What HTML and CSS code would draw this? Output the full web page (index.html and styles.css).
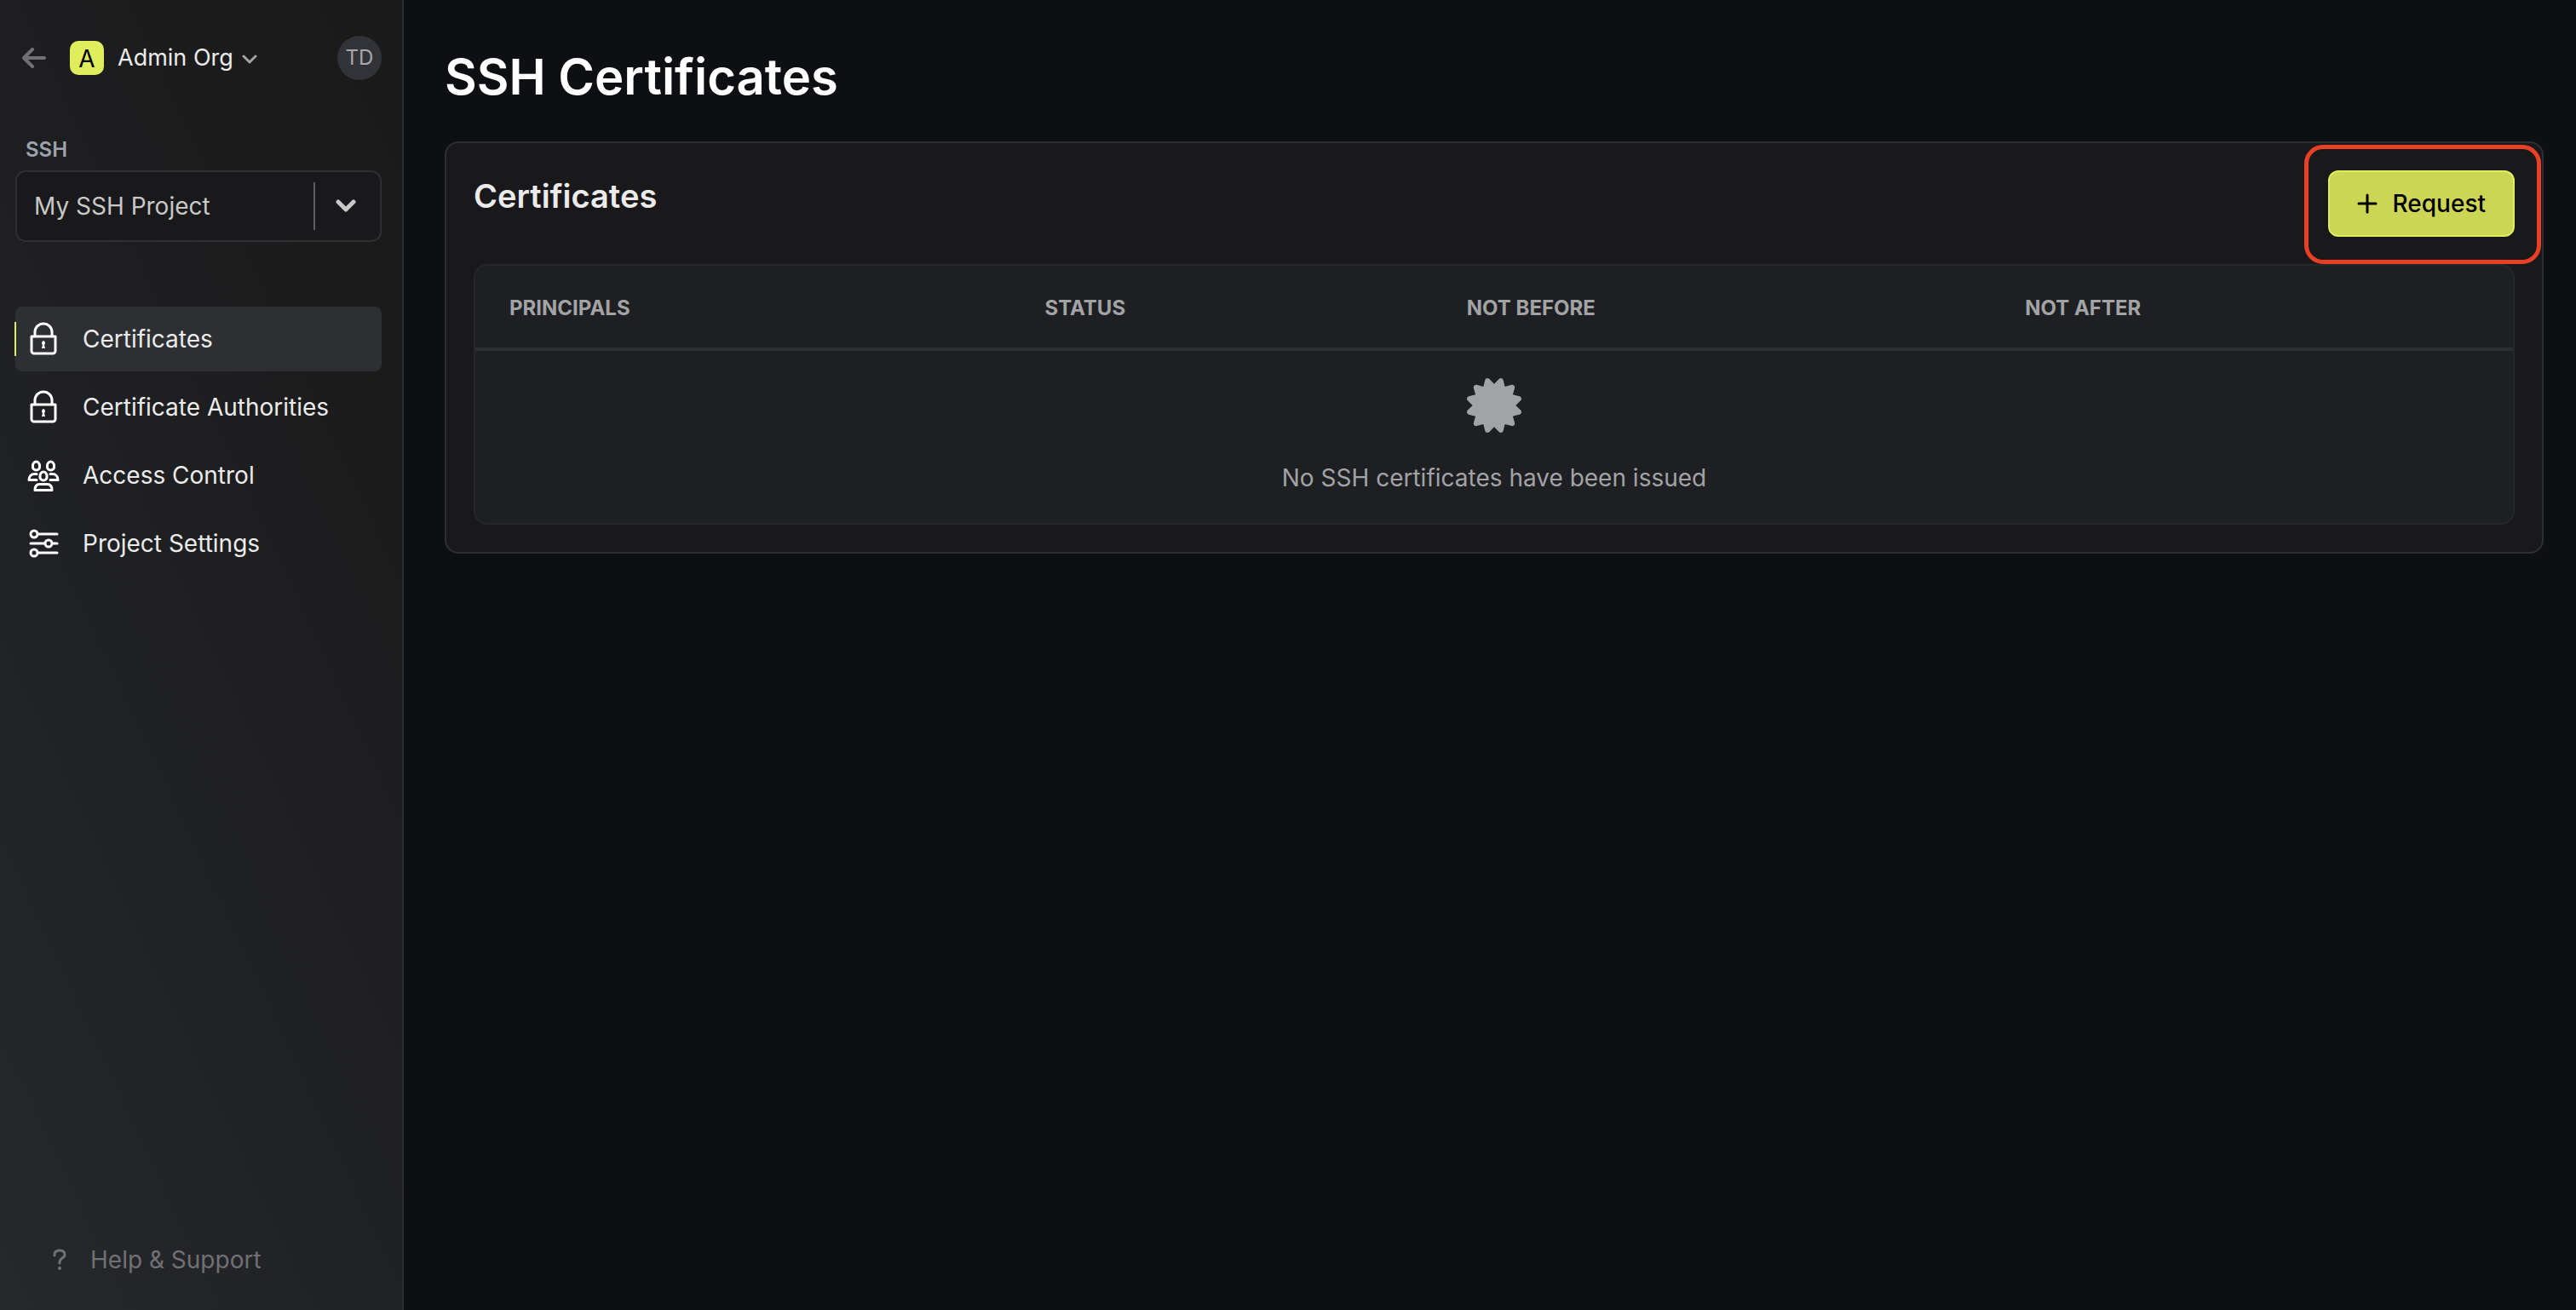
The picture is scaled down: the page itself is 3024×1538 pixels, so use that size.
FILE: index.html
```html
<!DOCTYPE html>
<html lang="en">
<head>
  <meta charset="utf-8">
  <title>SSH Certificates</title>
  <meta name="viewport" content="width=device-width, initial-scale=1">
  <link rel="stylesheet" href="styles.css">
</head>
<body>
  <div class="app">
    <aside class="sidebar">
      <div class="org-bar">
        <a class="back" href="#" aria-label="Back">
          <svg width="28" height="24" viewBox="0 0 28 24"><path d="M12 2 2 12l10 10M3 12h23"/></svg>
        </a>
        <button class="org" type="button">
          <span class="org-badge">A</span>
          <span class="org-name">Admin Org</span>
          <svg class="org-caret" width="18" height="12" viewBox="0 0 18 12"><path d="m2 2 7 7 7-7"/></svg>
        </button>
        <button class="avatar" type="button">TD</button>
      </div>

      <div class="project">
        <label class="project-label" for="project">SSH</label>
        <div class="select">
          <select id="project">
            <option>My SSH Project</option>
          </select>
          <span class="select-caret">
            <svg width="24" height="16" viewBox="0 0 24 16"><path d="m3 3 9 9 9-9"/></svg>
          </span>
        </div>
      </div>

      <nav class="nav">
        <a class="nav-item active" href="#">
          <svg class="nav-icon" viewBox="0 0 40 40"><path d="M10 17v-5a10 10 0 0 1 20 0v5M6 17h28v17a3 3 0 0 1-3 3H9a3 3 0 0 1-3-3z"/><path class="solid" d="M20 22a3 3 0 0 0-1 5l-1 4h4l-1-4a3 3 0 0 0-1-5z"/></svg>
          Certificates
        </a>
        <a class="nav-item" href="#">
          <svg class="nav-icon" viewBox="0 0 40 40"><path d="M10 17v-5a10 10 0 0 1 20 0v5M6 17h28v17a3 3 0 0 1-3 3H9a3 3 0 0 1-3-3z"/><path class="solid" d="M20 22a3 3 0 0 0-1 5l-1 4h4l-1-4a3 3 0 0 0-1-5z"/></svg>
          Certificate Authorities
        </a>
        <a class="nav-item" href="#">
          <svg class="nav-icon" viewBox="0 0 40 40"><path d="M7.500 9a4 5 0 0 1 8 0v1.500a4 3.500 0 0 1-8 0zM24.500 9a4 5 0 0 1 8 0v1.500a4 3.500 0 0 1-8 0zM16 21a4 5 0 0 1 8 0v1.500a4 3.500 0 0 1-8 0zM12 18.500H9.500C5.500 18.500 3 21.500 3 25.500h9M28 18.500h2.500c4 0 6.500 3 6.500 7h-9M10 37.500c0-4 1.500-7 5.500-7h9c4 0 5.500 3 5.500 7z"/></svg>
          Access Control
        </a>
        <a class="nav-item" href="#">
          <svg class="nav-icon" viewBox="0 0 40 40"><circle cx="9" cy="9" r="4"/><circle cx="26" cy="20" r="4"/><circle cx="9" cy="31" r="4"/><path d="M14 9h22M5 20h16M31 20h5M14 31h22"/></svg>
          Project Settings
        </a>
      </nav>

      <button class="help" type="button">
        <svg width="16" height="26" viewBox="0 0 16 26"><path d="M2 8V7c0-3 2-5 6-5s6 2 6 5c0 2-1 3-3 4-2 2-3 2-3 5v1"/><circle cx="8" cy="23" r="2"/></svg>
        Help &amp; Support
      </button>
    </aside>

    <main class="main">
      <h1>SSH Certificates</h1>
      <section class="card">
        <header class="card-head">
          <h2>Certificates</h2>
          <div class="request-wrap">
            <button class="request" type="button">
              <svg width="24" height="24" viewBox="0 0 24 24"><path d="M12 2v20M2 12h20"/></svg>
              Request
            </button>
          </div>
        </header>
        <div class="table-box">
          <table>
            <thead>
              <tr>
                <th scope="col">PRINCIPALS</th>
                <th scope="col">STATUS</th>
                <th scope="col">NOT BEFORE</th>
                <th scope="col">NOT AFTER</th>
              </tr>
            </thead>
            <tbody>
              <tr>
                <td colspan="4">
                  <div class="empty">
                    <svg width="64" height="64" viewBox="0 0 512 512"><path d="M458.622 255.920l45.985-45.005c13.708-12.977 7.316-36.039-10.664-40.339l-62.650-15.990 17.661-62.015c4.991-17.838-11.829-34.663-29.661-29.671l-61.994 17.667-15.984-62.671C337.085.197 313.765-6.276 300.990 7.228L256 53.570 211.011 7.229c-12.630-13.351-36.047-7.234-40.325 10.668l-15.984 62.671-61.995-17.667C74.870 57.907 58.056 74.738 63.046 92.572l17.661 62.015-62.650 15.990C.069 174.878-6.310 197.944 7.392 210.915l45.985 45.005-45.985 45.004c-13.708 12.977-7.316 36.039 10.664 40.339l62.650 15.990-17.661 62.015c-4.991 17.838 11.829 34.663 29.661 29.671l61.994-17.667 15.984 62.671c4.439 18.575 27.696 24.018 40.325 10.668L256 458.610l44.989 46.001c12.500 13.488 35.987 7.486 40.325-10.668l15.984-62.671 61.994 17.667c17.836 4.994 34.651-11.837 29.661-29.671l-17.661-62.015 62.650-15.990c17.987-4.302 24.366-27.367 10.664-40.339l-45.984-45.004z"/></svg>
                    <p>No SSH certificates have been issued</p>
                  </div>
                </td>
              </tr>
            </tbody>
          </table>
        </div>
      </section>
    </main>
  </div>
</body>
</html>
```
FILE: styles.css
```css
* {
  box-sizing: border-box;
}

body {
  margin: 0;
  background: #0e0f13;
  color: #ebebeb;
  font-family: Inter, "Liberation Sans", sans-serif;
  font-size: 28px;
  line-height: 42px;
}

button,
select {
  margin: 0;
  padding: 0;
  border: 0;
  background: none;
  color: inherit;
  font: inherit;
  cursor: pointer;
}

a {
  color: inherit;
  text-decoration: none;
}

svg {
  flex: none;
  fill: none;
  stroke: currentColor;
  stroke-width: 3px;
  stroke-linecap: round;
  stroke-linejoin: round;
}

.app {
  display: flex;
  min-height: 100vh;
}

/* Sidebar */

.sidebar {
  display: flex;
  flex: none;
  flex-direction: column;
  width: 474px;
  padding: 42px 24px 38px 18px;
  border-right: 2px solid #2d2f33;
  background: linear-gradient(65deg, #27282c, #202124 40%, #1b1b1c 80%, #1a1a1b);
}

.org-bar {
  display: flex;
  align-items: center;
  height: 52px;
  padding-left: 8px;
}

.back {
  display: flex;
  margin-right: 28px;
  color: #707174;
}

.back svg {
  stroke-width: 4px;
}

.org {
  display: flex;
  align-items: center;
}

.org-badge {
  display: grid;
  place-items: center;
  width: 40px;
  height: 40px;
  margin-right: 16px;
  border-radius: 10px;
  background: #e0ed5c;
  color: #000;
}

.org-name {
  font-size: 27px;
}

.org-caret {
  margin: 4px 0 0 10px;
  color: #a3a3a4;
}

.avatar {
  width: 52px;
  height: 52px;
  margin-left: auto;
  border-radius: 50%;
  background: #323338;
  color: #a9a9ab;
  font-size: 24px;
}

.project {
  display: flex;
  flex-direction: column;
  margin-top: 64px;
}

.project-label {
  padding: 0 12px;
  margin-bottom: 6px;
  color: #9ca3af;
  font-size: 24px;
  font-weight: 600;
  line-height: 36px;
}

.select {
  display: flex;
  align-items: center;
  height: 84px;
  border: 2px solid #2d2f33;
  border-radius: 12px;
  background: #19191b;
  color: #c8c8c8;
}

.select select {
  flex: 1;
  height: 100%;
  padding-left: 20px;
  appearance: none;
}

.select-caret {
  display: flex;
  align-items: center;
  width: 78px;
  height: 56px;
  padding-left: 24px;
  border-left: 2px solid #5d5f64;
}

.select-caret svg {
  stroke-width: 5px;
}

.nav {
  display: flex;
  flex-direction: column;
  gap: 4px;
  margin-top: 76px;
}

.nav-item {
  position: relative;
  display: flex;
  align-items: center;
  gap: 26px;
  height: 76px;
  padding-left: 13px;
  border-radius: 8px;
}

.nav-item.active {
  background: #2d2f33;
}

.nav-item.active::before {
  content: "";
  position: absolute;
  left: -1px;
  width: 2px;
  height: 40px;
  background: #e0ed5c;
}

.nav-icon {
  width: 40px;
  height: 40px;
  color: #fff;
}

.nav-icon .solid {
  fill: currentColor;
  stroke: none;
}

.help {
  display: flex;
  align-items: center;
  gap: 28px;
  margin-top: auto;
  padding-left: 44px;
  color: #707174;
}

.help circle {
  fill: currentColor;
  stroke: none;
}

/* Main */

.main {
  flex: 1;
  min-width: 0;
  padding: 54px 38px 54px 48px;
}

h1 {
  margin: 0 0 40px;
  color: #fff;
  font-size: 58px;
  font-weight: 600;
  line-height: 72px;
}

.card {
  padding: 32px;
  border: 2px solid #2d2f33;
  border-radius: 16px;
  background: #19191b;
}

.card-head {
  display: flex;
  align-items: flex-start;
  justify-content: space-between;
  margin-bottom: 32px;
}

h2 {
  margin: 0;
  font-size: 38px;
  font-weight: 600;
  line-height: 60px;
}

.request-wrap {
  position: relative;
}

/* Highlight ring drawn around the request button */
.request-wrap::after {
  content: "";
  position: absolute;
  inset: -30px -31px -32px -28px;
  border: 5px solid #e93f24;
  border-radius: 22px;
  pointer-events: none;
}

.request {
  display: flex;
  align-items: center;
  gap: 18px;
  height: 78px;
  padding: 0 32px;
  border: 2px solid #e0ed5c;
  border-radius: 12px;
  background: #ccd554;
  color: #000;
  font-weight: 500;
}

.table-box {
  border: 2px solid #26272a;
  border-radius: 16px;
  background: #1e1f23;
}

table {
  width: 100%;
  border-collapse: separate;
  border-spacing: 0;
}

th {
  padding: 32px 40px 28px;
  border-bottom: 4px solid #2d2f33;
  color: #a2a3a5;
  font-size: 24px;
  font-weight: 700;
  line-height: 36px;
  text-align: left;
}

td {
  padding: 32px 40px;
}

.empty {
  display: flex;
  flex-direction: column;
  align-items: center;
  gap: 32px;
  color: #a2a3a5;
}

.empty svg {
  fill: currentColor;
  stroke: none;
}

.empty p {
  margin: 0;
}
```
